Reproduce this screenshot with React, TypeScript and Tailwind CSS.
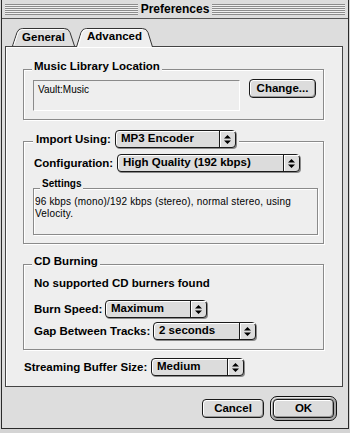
import React from "react";

function Arrows() {
  return (
    <svg width="7" height="9" viewBox="0 0 7 9">
      <path d="M3.5 0L7 3.5H0Z M0 5.5H7L3.5 9Z" fill="#000" />
    </svg>
  );
}

function Popup({ w, text }: { w: string; text: string }) {
  return (
    <div
      className={`flex h-[18px] ${w} rounded-[4px] border border-[#1a1a1a] bg-[#dcdcdc] shadow-[1px_1px_0_#8a8a8a,inset_1px_1px_0_#ffffff]`}
    >
      <div className="flex flex-1 items-center overflow-hidden whitespace-nowrap pl-[5px] text-[11.5px] font-bold leading-none">
        {text}
      </div>
      <div className="flex w-[16px] items-center justify-center border-l border-[#1a1a1a] shadow-[inset_1px_1px_0_#ffffff]">
        <Arrows />
      </div>
    </div>
  );
}

function Button({ w, text, className = "" }: { w: string; text: string; className?: string }) {
  return (
    <div
      className={`flex h-[19px] ${w} items-center justify-center rounded-[4px] border border-[#1a1a1a] bg-[#dcdcdc] text-[11.5px] font-bold leading-none shadow-[inset_1px_1px_0_#ffffff,inset_-1px_-1px_0_#9a9a9a] ${className}`}
    >
      {text}
    </div>
  );
}

function GroupLabel({ children }: { children: React.ReactNode }) {
  return (
    <span className="absolute left-[8px] top-[-11px] bg-[#eeeeee] px-[2px] text-[11.5px] font-bold leading-[15px]">
      {children}
    </span>
  );
}

const groupCls =
  "relative w-[301px] border border-[#8a8a8a] shadow-[1px_1px_0_#ffffff,inset_1px_1px_0_#ffffff]";

export default function App() {
  return (
    <div className="h-[433px] w-[350px] bg-[#d4d4d4] font-['Liberation_Sans',Arial,sans-serif] text-black">
      <div className="ml-[1px] flex h-[429px] w-[348px] flex-col border-x border-b border-[#2a2a2a] bg-[#dddddd]">
        {/* Title bar */}
        <div className="flex h-[19px] items-center border-b border-[#555555] px-[3px]">
          <div className="h-[11px] flex-1 bg-[image:repeating-linear-gradient(to_bottom,#8c8c8c_0px,#8c8c8c_1px,#f0f0f0_1px,#f0f0f0_2px)]" />
          <div className="px-[3px] text-[12px] font-bold leading-none">Preferences</div>
          <div className="h-[11px] flex-1 bg-[image:repeating-linear-gradient(to_bottom,#8c8c8c_0px,#8c8c8c_1px,#f0f0f0_1px,#f0f0f0_2px)]" />
        </div>

        {/* Tabs */}
        <div className="relative z-10 ml-[10px] mt-[9px] flex h-[18px] items-start gap-[1px]">
          <div className="relative flex h-[18px] w-[63px] items-center justify-center text-[11.5px] font-bold">
            <svg className="absolute inset-0" width="63" height="18" viewBox="0 0 63 18">
              <path
                d="M0.5 18 L5 4.5 Q6.3 0.5 10.5 0.5 H52.5 Q56.7 0.5 58 4.5 L62.5 18"
                fill="#dedede"
                stroke="#333333"
              />
              <path d="M2 17 L6 5 Q7.2 1.5 10.5 1.5 H52" fill="none" stroke="#ffffff" />
            </svg>
            <span className="relative pt-[1px] leading-none">General</span>
          </div>
          <div className="relative flex h-[19px] w-[77px] items-center justify-center text-[11.5px] font-bold">
            <svg className="absolute inset-0" width="77" height="19" viewBox="0 0 77 19">
              <path
                d="M0.5 19 L5 4.5 Q6.3 0.5 10.5 0.5 H66.5 Q70.7 0.5 72 4.5 L76.5 19"
                fill="#eeeeee"
                stroke="#333333"
              />
              <path d="M2 19 L6 5 Q7.2 1.5 10.5 1.5 H66" fill="none" stroke="#ffffff" />
            </svg>
            <span className="relative pb-[1px] leading-none">Advanced</span>
          </div>
        </div>

        {/* Panel */}
        <div className="ml-[3px] flex h-[341px] w-[338px] flex-col border border-[#444444] bg-[#eeeeee] pl-[17px] shadow-[inset_1px_1px_0_#ffffff]">
          {/* Music Library Location */}
          <div className={`${groupCls} mt-[22px] h-[51px]`}>
            <GroupLabel>Music Library Location</GroupLabel>
            <div className="flex items-start pl-[9px] pt-[10px]">
              <div className="h-[31px] w-[207px] border-l border-t border-b border-r border-l-[#8a8a8a] border-t-[#8a8a8a] border-b-[#ffffff] border-r-[#ffffff] pl-[4px] pt-[3px] text-[10px] leading-[12px]">
                Vault:Music
              </div>
              <Button w="w-[67px]" text="Change..." className="-mt-[1px] ml-[9px]" />
            </div>
          </div>

          {/* Import Using */}
          <div className={`${groupCls} mt-[21px] h-[103px]`}>
            <div className="absolute left-[9px] top-[-12px] flex items-center bg-[#eeeeee] px-[3px]">
              <span className="w-[79px] whitespace-nowrap text-[11.5px] font-bold leading-[15px]">
                Import Using:
              </span>
              <Popup w="w-[121px]" text="MP3 Encoder" />
            </div>
            <div className="flex items-center pl-[10px] pt-[12px]">
              <span className="w-[83px] whitespace-nowrap text-[11.5px] font-bold leading-[15px]">
                Configuration:
              </span>
              <Popup w="w-[183px]" text="High Quality (192 kbps)" />
            </div>
            <div className="relative ml-[9px] mt-[16px] h-[47px] w-[285px] border border-[#8a8a8a] shadow-[1px_1px_0_#ffffff,inset_1px_1px_0_#ffffff]">
              <span className="absolute left-[6px] top-[-11px] bg-[#eeeeee] px-[2px] text-[10px] font-bold leading-[12px]">
                Settings
              </span>
              <div className="pl-[1px] pt-[7px] text-[10px] leading-[12px] tracking-[0.18px]">
                96 kbps (mono)/192 kbps (stereo), normal stereo, using
                <br />
                Velocity.
              </div>
            </div>
          </div>

          {/* CD Burning */}
          <div className={`${groupCls} mt-[20px] h-[86px]`}>
            <GroupLabel>CD Burning</GroupLabel>
            <div className="flex flex-col pl-[10px] pt-[11px]">
              <div className="text-[11.5px] font-bold leading-[15px]">No supported CD burners found</div>
              <div className="mt-[9px] flex items-center">
                <span className="w-[71px] whitespace-nowrap text-[11.5px] font-bold leading-[15px]">
                  Burn Speed:
                </span>
                <Popup w="w-[102px]" text="Maximum" />
              </div>
              <div className="mt-[4px] flex items-center">
                <span className="w-[119px] whitespace-nowrap text-[11.5px] font-bold leading-[15px]">
                  Gap Between Tracks:
                </span>
                <Popup w="w-[103px]" text="2 seconds" />
              </div>
            </div>
          </div>

          {/* Streaming */}
          <div className="ml-[1px] mt-[8px] flex items-center">
            <span className="w-[127px] whitespace-nowrap text-[11.5px] font-bold leading-[15px]">
              Streaming Buffer Size:
            </span>
            <Popup w="w-[93px]" text="Medium" />
          </div>
        </div>

        {/* Buttons */}
        <div className="mt-[9px] flex items-center justify-end gap-[6px] pr-[11px]">
          <Button w="w-[62px]" text="Cancel" />
          <div className="h-[25px] w-[67px] rounded-[7px] border border-[#111111] bg-[#a8a8a8] p-[2px] shadow-[inset_1px_1px_0_#e8e8e8]">
            <Button w="w-full" text="OK" />
          </div>
        </div>
      </div>
    </div>
  );
}
